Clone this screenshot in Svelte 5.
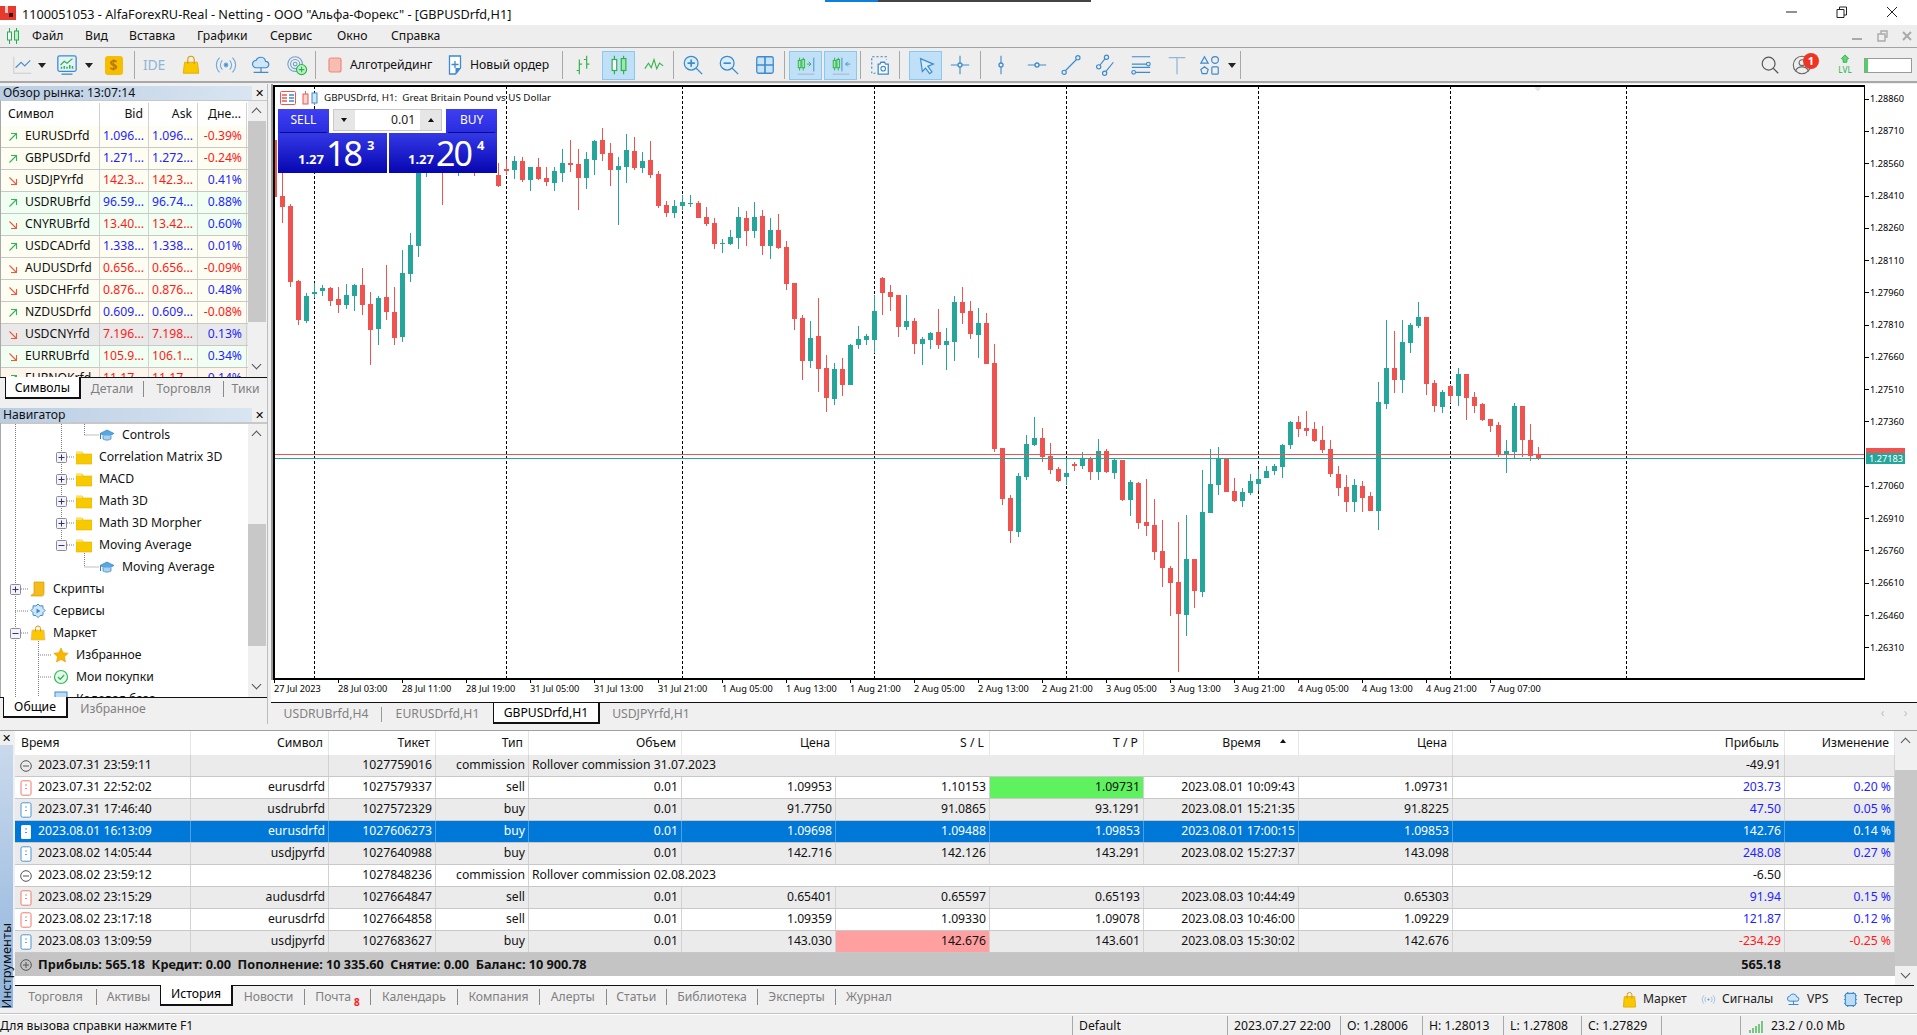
<script>
  const market = [
    ['EURUSDrfd','1.096...','1.096...','-0.39%','u','b','r','y'],
    ['GBPUSDrfd','1.271...','1.272...','-0.24%','u','b','r','y'],
    ['USDJPYrfd','142.3...','142.3...','0.41%','d','r','b','y'],
    ['USDRUBrfd','96.59...','96.74...','0.88%','u','b','b','g'],
    ['CNYRUBrfd','13.40...','13.42...','0.60%','d','r','b','g'],
    ['USDCADrfd','1.338...','1.338...','0.01%','u','b','b','y'],
    ['AUDUSDrfd','0.656...','0.656...','-0.09%','d','r','r','y'],
    ['USDCHFrfd','0.876...','0.876...','0.48%','d','r','b','y'],
    ['NZDUSDrfd','0.609...','0.609...','-0.08%','u','b','r','y'],
    ['USDCNYrfd','7.196...','7.198...','0.13%','d','r','b','n'],
    ['EURRUBrfd','105.9...','106.1...','0.34%','d','r','b','g'],
    ['EURNOKrfd','11.17...','11.17...','0.14%','u','r','b','p']
  ];
  const tree = [
    [3,'hat','','Controls'],[2,'folder','p','Correlation Matrix 3D'],[2,'folder','p','MACD'],
    [2,'folder','p','Math 3D'],[2,'folder','p','Math 3D Morpher'],[2,'folder','m','Moving Average'],
    [3,'hat','','Moving Average'],[0,'script','p','Скрипты'],[0,'gear','','Сервисы'],
    [0,'bag','m','Маркет'],[1,'star','','Избранное'],[1,'check','','Мои покупки'],[1,'doc','','Кодовая база']
  ];
  const leftTabs = [['Символы',76,true],['Детали',64,false],['Торговля',80,false],['Тики',43,false]];
  const navTabs = [['Общие',65,true],['Избранное',90,false]];
  const chartTabs = [['USDRUBrfd,H4',111,false],['EURUSDrfd,H1',111,false],['GBPUSDrfd,H1',107,true],['USDJPYrfd,H1',102,false]];
  const boxTabs = [['Торговля',82],['Активы',63],['История',73,true],['Новости',72],['Почта',66,false,'8'],['Календарь',87],['Компания',82],['Алерты',66.5],['Статьи',60.5],['Библиотека',91],['Эксперты',78],['Журнал',66]];
  const status = [['Для вызова справки нажмите F1',1073],['Default',155],['2023.07.27 22:00',113],['O: 1.28006',82],['H: 1.28013',81],['L: 1.27808',78],['C: 1.27829',80],['',79]];
  const head = [['Время','l'],['Символ','r'],['Тикет','r'],['Тип','r'],['Объем','r'],['Цена','r'],['S / L','r'],['T / P','r'],['Время','c'],['Цена','r'],['Прибыль','r'],['Изменение','r']];
  const rows = [
    {k:'c',t:'2023.07.31 23:59:11',tk:'1027759016',c:'Rollover commission 31.07.2023',p:'-49.91',z:1},
    {k:'s',t:'2023.07.31 22:52:02',s:'eurusdrfd',tk:'1027579337',ty:'sell',o:['0.01','1.09953','1.10153','1.09731','2023.08.01 10:09:43','1.09731'],p:'203.73',ch:'0.20 %',tpHit:1},
    {k:'b',t:'2023.07.31 17:46:40',s:'usdrubrfd',tk:'1027572329',ty:'buy',o:['0.01','91.7750','91.0865','93.1291','2023.08.01 15:21:35','91.8225'],p:'47.50',ch:'0.05 %',z:1},
    {k:'b',t:'2023.08.01 16:13:09',s:'eurusdrfd',tk:'1027606273',ty:'buy',o:['0.01','1.09698','1.09488','1.09853','2023.08.01 17:00:15','1.09853'],p:'142.76',ch:'0.14 %',sel:1},
    {k:'b',t:'2023.08.02 14:05:44',s:'usdjpyrfd',tk:'1027640988',ty:'buy',o:['0.01','142.716','142.126','143.291','2023.08.02 15:27:37','143.098'],p:'248.08',ch:'0.27 %',z:1},
    {k:'c',t:'2023.08.02 23:59:12',tk:'1027848236',c:'Rollover commission 02.08.2023',p:'-6.50'},
    {k:'s',t:'2023.08.02 23:15:29',s:'audusdrfd',tk:'1027664847',ty:'sell',o:['0.01','0.65401','0.65597','0.65193','2023.08.03 10:44:49','0.65303'],p:'91.94',ch:'0.15 %',z:1},
    {k:'s',t:'2023.08.02 23:17:18',s:'eurusdrfd',tk:'1027664858',ty:'sell',o:['0.01','1.09359','1.09330','1.09078','2023.08.03 10:46:00','1.09229'],p:'121.87',ch:'0.12 %'},
    {k:'b',t:'2023.08.03 13:09:59',s:'usdjpyrfd',tk:'1027683627',ty:'buy',o:['0.01','143.030','142.676','143.601','2023.08.03 15:30:02','142.676'],p:'-234.29',ch:'-0.25 %',z:1,slHit:1,neg:1}
  ];

  // wick top, wick bottom, body top, body bottom in crop units; colour
  const a8 = {0:[-90,80,-90,80,'r'],1:[-60,158,78,110,'r'],2:[102,350,108,335,'r'],3:[330,465,333,450,'r'],4:[370,458,378,453,'t'],5:[340,383,366,372,'t'],6:[346,378,354,363,'t'],7:[351,408,354,393,'r'],8:[351,429,387,405,'r'],9:[342,417,375,405,'t'],10:[342,423,345,378,'t'],11:[294,435,345,405,'r'],12:[366,585,402,480,'r'],13:[378,525,384,477,'t'],14:[285,450,381,426,'r'],15:[351,525,426,504,'r'],16:[240,516,309,501,'t'],17:[189,336,225,312,'t'],18:[-30,261,-30,228,'t'],19:[-30,21,-30,-30,'t'],21:[-30,105,-30,-30,'r'],23:[-30,18,-30,-30,'t'],25:[-30,18,-30,-30,'r'],
    48:[3,114,12,108,'r'],49:[93,141,105,129,'r'],50:[90,144,108,129,'t'],51:[75,120,96,108,'t'],52:[75,111,99,102,'t'],53:[93,144,99,144,'r'],54:[111,168,141,162,'r'],55:[144,237,159,222,'r'],56:[207,249,219,222,'t'],57:[180,225,201,222,'t'],58:[111,237,141,204,'t'],59:[123,228,144,183,'r'],60:[96,204,141,183,'t'],61:[120,255,138,228,'r'],62:[144,267,180,228,'t'],63:[132,237,180,234,'r'],64:[213,360,231,342,'r'],65:[339,480,339,447,'r'],66:[435,630,444,573,'r'],67:[453,594,504,573,'t'],68:[384,666,498,597,'r'],69:[555,726,594,684,'r'],70:[579,705,597,687,'t'],71:[564,678,597,645,'r'],72:[522,645,525,645,'t'],73:[468,537,507,525,'t'],74:[492,525,498,510,'t'],75:[375,549,423,510,'t'],76:[321,435,324,369,'r'],77:[345,423,366,381,'r'],78:[375,501,375,471,'r'],79:[375,480,453,471,'t']};
  const a10 = {28:[128,200,165,198,'r'],29:[116,165,147,153,'r'],30:[108,177,123,150,'t'],31:[111,186,123,180,'r'],32:[141,213,141,180,'t'],33:[114,180,141,177,'r'],34:[141,198,174,186,'r'],35:[141,213,153,189,'t'],36:[87,186,129,159,'t'],37:[60,156,129,135,'r'],38:[87,270,132,174,'r'],39:[96,207,117,174,'t'],40:[60,165,63,120,'t'],41:[24,123,60,102,'r'],42:[69,198,99,150,'r'],43:[111,315,138,150,'t'],44:[42,189,90,141,'t'],45:[51,150,93,144,'r'],46:[96,159,123,144,'t'],47:[63,174,120,165,'r']};
  const a9 = [[204,312,213,282,'r'],[261,345,267,282,'t'],[246,297,249,270,'t'],[177,297,246,285,'r'],[234,360,273,285,'t'],[138,333,156,276,'t'],[111,222,156,189,'r'],[153,267,183,252,'r'],[174,324,219,255,'t'],[189,342,219,342,'r'],[282,606,339,597,'r'],[594,765,594,747,'r'],[735,879,744,843,'r'],[669,861,678,846,'t'],[555,690,582,681,'t'],[501,588,564,585,'t'],[534,636,564,621,'r'],[579,672,618,660,'r'],[651,696,657,693,'r'],[625,705,669,681,'t'],[636,663,642,648,'r'],[606,657,625,648,'t'],[621,690,627,666,'r'],[567,690,603,666,'t'],[597,669,603,666,'r'],[627,687,630,669,'t'],[630,753,630,750,'r'],[690,798,696,750,'t'],[696,837,699,819,'r'],[687,858,816,828,'r'],[747,930,825,906,'r'],[810,1011,903,954,'r'],[948,1098,954,999,'r'],[816,1266,996,1092,'r'],[795,1158,927,1095,'t'],[927,1074,927,1023,'r'],[660,1041,786,1026,'t'],[597,789,702,789,'t'],[591,735,625,705,'t'],[625,726,627,726,'r'],[684,756,723,753,'r'],[714,771,726,753,'t'],[672,735,693,729,'t'],[657,723,687,702,'t'],[648,684,663,684,'t'],[642,675,648,663,'t'],[582,684,585,651,'t'],[513,597,516,585,'t'],[498,561,516,537,'r'],[483,558,534,543,'r'],[516,576,537,573,'r'],[528,609,570,600,'r'],[570,681,597,672,'r'],[648,738,672,714,'r'],[675,786,711,756,'r'],[687,786,705,756,'t'],[693,786,708,744,'r'],[726,783,738,783,'r'],[396,840,456,783,'t'],[210,477,354,462,'t'],[243,429,354,390,'r'],[210,429,276,390,'t'],[219,309,225,279,'t'],[156,234,201,228,'t'],[201,435,201,402,'r'],[390,486,399,468,'r'],[420,489,426,471,'t'],[405,459,408,438,'r'],[354,468,372,438,'t'],[372,510,372,444,'r'],[426,489,441,468,'r'],[459,513,462,510,'r'],[507,546,507,528,'r'],[516,621,525,615,'r'],[570,669,603,615,'t'],[459,624,468,606,'t'],[468,621,468,570,'r'],[522,633,570,618,'r'],[591,630,615,627,'r']];

  const toCandle = (i, v, y0) => ({
    x: 274.5 + 8 * i,
    wt: y0 + v[0] / 3, wb: y0 + v[1] / 3, bt: y0 + v[2] / 3, bb: y0 + v[3] / 3,
    c: v[4] === 'r' ? '#ef5350' : '#26a69a'
  });
  const candles = [
    ...Object.entries(a8).map(([i, v]) => toCandle(+i, v, 170)),
    ...Object.entries(a10).map(([i, v]) => toCandle(+i, v, 120)),
    ...a9.map((v, i) => toCandle(80 + i, v, 250))
  ];
  const dashes = [314.5,506.5,682.5,874.5,1066.5,1258.5,1450.5,1626.5];
  const prices = ['1.28860','1.28710','1.28560','1.28410','1.28260','1.28110','1.27960','1.27810','1.27660','1.27510','1.27360','','1.27060','1.26910','1.26760','1.26610','1.26460','1.26310'];
  const times = ['27 Jul 2023','28 Jul 03:00','28 Jul 11:00','28 Jul 19:00','31 Jul 05:00','31 Jul 13:00','31 Jul 21:00','1 Aug 05:00','1 Aug 13:00','1 Aug 21:00','2 Aug 05:00','2 Aug 13:00','2 Aug 21:00','3 Aug 05:00','3 Aug 13:00','3 Aug 21:00','4 Aug 05:00','4 Aug 13:00','4 Aug 21:00','7 Aug 07:00'];
  const guides = [
    [15.5,423,15.5,696],[61.5,423,61.5,544],[84.5,423,84.5,434],[84.5,434,99,434],[84.5,550,84.5,566],[84.5,566,99,566],
    [61,456,74,456],[61,478,74,478],[61,500,74,500],[61,522,74,522],[61,544,74,544],
    [15,588,28,588],[15,610,28,610],[15,632,28,632],[38.5,640,38.5,696],[38,654,51,654],[38,676,51,676]
  ];
</script>

<div class="app">
  <header class="title">
    <div class="progress"></div>
    <svg class="logo" viewBox="0 0 16 16"><rect width="16" height="14" y="1" fill="#e63a2e"/><rect x="5" y="1" width="3" height="7" fill="#f7c9c4"/><rect x="9" y="8" width="4" height="4" fill="#3a1512"/></svg>
    <span class="title-text">1100051053 - AlfaForexRU-Real - Netting - ООО "Альфа-Форекс" - [GBPUSDrfd,H1]</span>
    <div class="winbtns">
      <svg viewBox="0 0 50 25"><path d="M19 12h11" stroke="#222" fill="none"/></svg>
      <svg viewBox="0 0 50 25"><path d="M20 9.500h7v8h-7zM22.500 9.500v-2.500h7v8h-2.500" stroke="#222" fill="none"/></svg>
      <svg viewBox="0 0 50 25"><path d="M20 7l10 10M30 7L20 17" stroke="#222" fill="none"/></svg>
    </div>
  </header>

  <nav class="menu">
    <svg class="menu-logo" viewBox="0 0 14 18"><path d="M3.500 1v16M10.500 1v16" stroke="#27ae4f"/><rect x="1.500" y="5" width="4" height="8" fill="#fff" stroke="#27ae4f"/><rect x="8.500" y="4" width="4" height="9" fill="#bff0c8" stroke="#27ae4f"/></svg>
    <div class="menu-items">
      <span>Файл</span><span>Вид</span><span>Вставка</span><span>Графики</span><span>Сервис</span><span>Окно</span><span>Справка</span>
    </div>
    <div class="innerbtns">
      <svg viewBox="0 0 14 12"><path d="M2 9h10" stroke="#aaa" stroke-width="2"/></svg>
      <svg viewBox="0 0 14 12"><path d="M3 4h7v7H3zM6 4V1h6v6h-2" stroke="#aaa" stroke-width="1.400" fill="none"/></svg>
      <svg viewBox="0 0 14 12"><path d="M3 2l8 8M11 2l-8 8" stroke="#aaa" stroke-width="2"/></svg>
    </div>
  </nav>

  <div class="toolbar">
    <span class="tb w27"><svg viewBox="0 0 24 24"><path d="M3 3v18h19" stroke="#c8c8c8" fill="none"/><path d="M5 15l6-6 4 4 6-6" stroke="#4a90d0" stroke-width="1.300" fill="none"/></svg></span>
    <span class="tb w14"><i class="caret"></i></span>
    <span class="tb w36"><svg viewBox="0 0 24 24"><rect x="2" y="2" width="20" height="17" rx="2" fill="#e6f2fb" stroke="#3d8bcd" stroke-width="1.400"/><path d="M5 12l4-4 3 2 6-5" stroke="#2bb24c" stroke-width="1.300" fill="none"/><path d="M6 16v-2M9 16v-3M12 16v-2M15 16v-4M18 16v-3" stroke="#2bb24c" stroke-width="1.600"/><path d="M6 22h12" stroke="#3d8bcd" stroke-width="1.400"/></svg></span>
    <span class="tb w8"><i class="caret"></i></span>
    <span class="tb w41"><span class="dollar">$</span></span>
    <i class="sep"></i>
    <span class="tb w38"><span class="ide">IDE</span></span>
    <span class="tb w35"><svg viewBox="0 0 24 24"><path d="M5 9h14l1.500 12h-17z" fill="#f8c800" stroke="#e6ae00"/><path d="M8.500 11V6a3.500 3.500 0 0 1 7 0v5" stroke="#d89a00" fill="none" stroke-width="1.200"/></svg></span>
    <span class="tb w35"><svg viewBox="0 0 24 24" fill="none" stroke="#74abd8" stroke-width="1.200"><circle cx="12" cy="12" r="2" fill="#4a90d0"/><path d="M8 7a7 7 0 0 0 0 10M16 7a7 7 0 0 1 0 10M5 4a11 11 0 0 0 0 16M19 4a11 11 0 0 1 0 16"/></svg></span>
    <span class="tb w35"><svg viewBox="0 0 24 24" fill="none" stroke="#3d8bcd" stroke-width="1.300"><path d="M7 15a4 4 0 0 1-.5-8 5.500 5.500 0 0 1 10.500 1 3.500 3.500 0 0 1 0 7z" fill="#cfe6f8"/><path d="M12 15v5M4 20h16"/></svg></span>
    <span class="tb w37"><svg viewBox="0 0 24 24" fill="none" stroke="#6fa3cf" stroke-width="1.200"><circle cx="10" cy="11" r="8"/><circle cx="10" cy="11" r="5"/><circle cx="10" cy="11" r="2"/><circle cx="17" cy="17" r="5.500" fill="#bdf0c6" stroke="#2bb24c"/><path d="M17 14v6M14 17h6" stroke="#2bb24c"/></svg></span>
    <i class="sep"></i>
    <span class="algo"><svg viewBox="0 0 14 16"><rect x="1" y="1" width="12" height="14" rx="2" fill="#f7bdb3" stroke="#f08a78" stroke-width="1.200"/></svg></span>
    <span class="tb-label l81">Алготрейдинг</span>
    <span class="order"><svg viewBox="0 0 16 20"><path d="M2.500 1h11v12l-5 6h-6z" fill="#fff" stroke="#3d8bcd" stroke-width="1.300"/><path d="M8 6v7M4.500 9.500h7" stroke="#3d8bcd" stroke-width="1.300"/><path d="M8.500 19l5-6h-5z" fill="#3d8bcd"/></svg></span>
    <span class="tb-label l81">Новый ордер</span>
    <i class="sep m11"></i>
    <span class="tb w39"><svg viewBox="0 0 24 24" stroke="#35b34a" stroke-width="1.300" fill="none"><path d="M8 6v16M5 18h3M8 11h3M16 2v14M13 6h3M16 11h3"/></svg></span>
    <span class="tb sel w33"><svg viewBox="0 0 24 24" stroke="#2bb24c" stroke-width="1.300"><path d="M7 2v20M17 2v20"/><rect x="4.500" y="6" width="5" height="12" fill="#fff"/><rect x="14.500" y="5" width="5" height="13" fill="#9ee8a9"/></svg></span>
    <span class="tb w38"><svg viewBox="0 0 24 24"><path d="M2 16l4-6 3 5 3-9 3 10 3-6 4 3" stroke="#35b34a" stroke-width="1.200" fill="none"/></svg></span>
    <i class="sep"></i>
    <span class="tb w38"><svg viewBox="0 0 24 24" fill="none" stroke="#3d8bcd" stroke-width="1.400"><circle cx="10" cy="10" r="7.500" fill="#dcedfa"/><path d="M10 6v8M6 10h8" stroke-width="1.800"/><path d="M15.500 15.500L22 22"/></svg></span>
    <span class="tb w34"><svg viewBox="0 0 24 24" fill="none" stroke="#3d8bcd" stroke-width="1.400"><circle cx="10" cy="10" r="7.500" fill="#dcedfa"/><path d="M6 10h8" stroke-width="1.800"/><path d="M15.500 15.500L22 22"/></svg></span>
    <span class="tb w38"><svg viewBox="0 0 24 24" fill="#c9e4f9" stroke="#3d8bcd" stroke-width="1.400"><rect x="3" y="3" width="18" height="18" rx="2"/><path d="M12 3v18M3 12h18" stroke-width="1.800"/></svg></span>
    <i class="sep"></i>
    <span class="tb sel w33 ml4"><svg viewBox="0 0 24 24"><path d="M5 4v14M9 4v14" stroke="#2bb24c"/><rect x="3.500" y="7" width="3" height="8" fill="#9ee8a9" stroke="#2bb24c"/><rect x="7.500" y="6" width="3" height="9" fill="#9ee8a9" stroke="#2bb24c"/><path d="M13 11h4M15 8.500l2.500 2.500-2.500 2.500" stroke="#2bb24c" fill="none"/><path d="M20.500 4v15" stroke="#3d8bcd"/><path d="M3 22h18" stroke="#a0b4c4"/></svg></span>
    <span class="tb sel w33 ml2"><svg viewBox="0 0 24 24"><path d="M5 4v14M9 4v14" stroke="#2bb24c"/><rect x="3.500" y="7" width="3" height="8" fill="#9ee8a9" stroke="#2bb24c"/><rect x="7.500" y="6" width="3" height="9" fill="#9ee8a9" stroke="#2bb24c"/><path d="M13 4v15" stroke="#3d8bcd"/><path d="M22 11h-5M19.500 8.500L17 11l2.500 2.500" stroke="#3d8bcd" fill="none"/><path d="M3 22h18" stroke="#a0b4c4"/></svg></span>
    <i class="sep m3"></i>
    <span class="tb w38"><svg viewBox="0 0 24 24" fill="none" stroke="#3d8bcd" stroke-width="1.200"><path d="M3 16V3h16v3" stroke-dasharray="2.500 2"/><path d="M3 19v2h4" stroke-dasharray="2 2"/><path d="M10 11h2l1-2h4l1 2h3v11H10z" fill="#fff" stroke-width="1.400"/><circle cx="15.500" cy="16" r="2.500"/></svg></span>
    <i class="sep"></i>
    <span class="tb sel w33 ml9"><svg viewBox="0 0 24 24"><path d="M6 5l14 6-6 2.500 4.500 6-2.500 2-4.500-6L8 19z" fill="#d6ecfb" stroke="#3d8bcd" stroke-width="1.300"/></svg></span>
    <span class="tb w36"><svg viewBox="0 0 24 24" fill="none" stroke="#3d8bcd" stroke-width="1.200"><path d="M12 2v8M12 14v8M2 12h8M14 12h8"/><circle cx="12" cy="12" r="2.200" stroke-width="1.400"/></svg></span>
    <i class="sep m2"></i>
    <span class="tb w39"><svg viewBox="0 0 24 24" fill="none" stroke="#3d8bcd" stroke-width="1.200"><path d="M12 2v8M12 14v8"/><circle cx="12" cy="12" r="2.200" stroke-width="1.400"/></svg></span>
    <span class="tb w33"><svg viewBox="0 0 24 24" fill="none" stroke="#3d8bcd" stroke-width="1.200"><path d="M2 12h8M14 12h8"/><circle cx="12" cy="12" r="2.200" stroke-width="1.400"/></svg></span>
    <span class="tb w35"><svg viewBox="0 0 24 24" fill="none" stroke="#3d8bcd" stroke-width="1.300"><path d="M6 18L18 6"/><circle cx="4.500" cy="20" r="2.300"/><circle cx="19.500" cy="4" r="2.300"/></svg></span>
    <span class="tb w35"><svg viewBox="0 0 24 24" fill="none" stroke="#3d8bcd" stroke-width="1.300"><path d="M5.500 12L11 5M12 19L20 9"/><circle cx="4" cy="14" r="2.300"/><circle cx="12.500" cy="3.500" r="2.300"/><circle cx="10.500" cy="21" r="2.300"/></svg></span>
    <span class="tb w36"><svg viewBox="0 0 24 24" fill="none" stroke="#3d8bcd" stroke-width="1.300"><path d="M2 3h20M2 11h16M2 14.500h20M6 20h16"/><circle cx="20" cy="11" r="2"/><circle cx="4" cy="20" r="2"/></svg></span>
    <span class="tb w35"><svg viewBox="0 0 24 24" fill="none" stroke="#8fb9dc" stroke-width="1.400"><path d="M3 4h18M12 4v18"/></svg></span>
    <span class="tb w32"><svg viewBox="0 0 24 24" fill="none" stroke="#3d8bcd" stroke-width="1.300"><path d="M6 3l4 7H2z"/><circle cx="17.500" cy="6.500" r="3.700"/><path d="M6 14l4 3-1.500 4.500h-5L2 17z"/><rect x="14" y="14" width="7" height="8" rx="1"/></svg></span>
    <span class="tb w12"><i class="caret"></i></span>
    <i class="sep m2"></i>
    <span class="tb-spacer"></span>
    <span class="tb w32"><svg viewBox="0 0 24 24" fill="none" stroke="#555" stroke-width="1.300"><circle cx="10.500" cy="10.500" r="7"/><path d="M15.500 15.500L21 21"/></svg></span>
    <span class="tb w32 user"><svg viewBox="0 0 24 24" fill="none" stroke="#666" stroke-width="1.200"><circle cx="12" cy="12" r="9.500"/><circle cx="12" cy="9.500" r="3.200"/><path d="M5 19c1-4 4-5 7-5s6 1 7 5"/></svg><b class="badge">1</b></span>
    <span class="tb w32 ml11"><svg viewBox="0 0 24 24"><path d="M12 1l4 4-2 1v3h-4V6L8 5z" fill="#5fd873" stroke="#2bb24c"/><text x="12" y="21" text-anchor="middle" class="lvl">LVL</text></svg></span>
    <span class="meter ml3"><i></i></span>
  </div>

  <div class="main">
    <aside class="left">
      <div class="phead"><span>Обзор рынка: 13:07:14</span><b class="x">✕</b></div>
      <div class="mw">
        <div class="mw-table">
          <div class="mw-row mw-head"><span class="sym">Символ</span><span>Bid</span><span>Ask</span><span>Дне...</span></div>
          {#each market as m}
            <div class="mw-row bg-{m[7]}">
              <span class="sym">
                <svg class="arr" viewBox="0 0 10 10">{#if m[4]==='u'}<path d="M1.500 8.500L8.500 1.500M3 1.500h5.500V7" stroke="#2fb55a" fill="none" stroke-width="1.100"/>{:else}<path d="M1.500 1.500L8.500 8.500M3 8.500h5.500V3" stroke="#f0583c" fill="none" stroke-width="1.100"/>{/if}</svg>{m[0]}</span>
              <span class="c-{m[5]}">{m[1]}</span><span class="c-{m[5]}">{m[2]}</span><span class="c-{m[6]}">{m[3]}</span>
            </div>
          {/each}
        </div>
        <div class="sb sb-mw"><span class="chev up"></span><i class="thumb"></i><span class="sb-fill"></span><span class="chev down"></span></div>
      </div>
      <div class="ptabs">
        {#each leftTabs as t}<span class="ptab" class:on={t[2]} style:width="{t[1]}px">{t[0]}</span>{/each}
      </div>

      <div class="phead nav"><span>Навигатор</span><b class="x">✕</b></div>
      <div class="navbody">
        <div class="tree">
          <svg class="guides" viewBox="0 423 248 273">
            {#each guides as g}<line x1={g[0]} y1={g[1]} x2={g[2]} y2={g[3]} stroke="#808080" stroke-dasharray="1 1"/>{/each}
          </svg>
          {#each tree as n}
            <div class="node" style:padding-left="{7 + 23 * n[0]}px">
              <span class="boxslot">{#if n[2]}<span class="exp"><svg viewBox="0 0 11 11"><rect x=".5" y=".5" width="10" height="10" rx="1" fill="#f4f4f8" stroke="#8a8a9a"/><path d="M2.500 5.500h6" stroke="#33337a"/>{#if n[2]==='p'}<path d="M5.500 2.500v6" stroke="#33337a"/>{/if}</svg></span>{/if}</span>
              <span class="nicon">
                {#if n[1]==='folder'}<svg viewBox="0 0 16 16"><path d="M0 3h6l1 2h9v10H0z" fill="#f7c900" stroke="#e7b400" stroke-width=".6"/><path d="M0 3h6v2H0z" fill="#ffe15a"/></svg>
                {:else if n[1]==='hat'}<svg viewBox="0 0 16 16"><path d="M8 3L1 6.500 8 10l7-3.500z" fill="#5aa7e0" stroke="#2f7fc0" stroke-width=".7"/><path d="M4 8.500v3.500c2 1.500 6 1.500 8 0V8.500" fill="#a8d2f0" stroke="#2f7fc0" stroke-width=".7"/><path d="M1.500 7v5" stroke="#2f7fc0"/></svg>
                {:else if n[1]==='script'}<svg viewBox="0 0 16 16"><path d="M4 1h10v11c0 2-1 3-2 3H1c0-1 1-2 3-2z" fill="#f4bb1c" stroke="#dd9c00" stroke-width=".7"/></svg>
                {:else if n[1]==='gear'}<svg viewBox="0 0 16 16"><path d="M8 1l2 2 2.800-.3.300 2.800 2 2-2 2-.3 2.800-2.800.3-2 2-2-2-2.800-.3-.3-2.800-2-2 2-2 .3-2.800 2.800.3z" fill="#cfe6f8" stroke="#3d8bcd"/><path d="M6.500 5.500l4 2.500-4 2.500z" fill="#3d8bcd"/></svg>
                {:else if n[1]==='bag'}<svg viewBox="0 0 16 16"><path d="M2 5h12l1 10H1z" fill="#f8c800" stroke="#f0a8a0" stroke-width=".6"/><path d="M5.500 6.500V3.500a2.500 2.500 0 0 1 5 0v3" stroke="#d89a00" fill="none"/></svg>
                {:else if n[1]==='star'}<svg viewBox="0 0 16 16"><path d="M8 1l2.200 4.700 5 .6-3.700 3.500 1 5.200L8 12.400 3.500 15l1-5.200L.8 6.300l5-.6z" fill="#f8b800" stroke="#e59b00" stroke-width=".6"/></svg>
                {:else if n[1]==='check'}<svg viewBox="0 0 16 16"><circle cx="8" cy="8" r="6.500" fill="#e4f9ea" stroke="#35b85a" stroke-width="1.200"/><path d="M5 8l2.200 2.300L11.200 6" stroke="#35b85a" stroke-width="1.300" fill="none"/></svg>
                {:else}<svg viewBox="0 0 16 16"><rect x="2" y="1" width="12" height="14" fill="#bcdcf5" stroke="#3d8bcd"/></svg>{/if}
              </span>
              <span class="nlabel">{n[3]}</span>
            </div>
          {/each}
        </div>
        <div class="sb sb-nav"><span class="chev up"></span><span class="sb-gap1"></span><i class="thumb"></i><span class="sb-fill"></span><span class="chev down"></span></div>
      </div>
      <div class="ptabs navtabs">
        {#each navTabs as t}<span class="ptab" class:on={t[2]} style:width="{t[1]}px">{t[0]}</span>{/each}
      </div>
    </aside>

    <section class="chartcol">
      <div class="chart">
        <svg class="plot" viewBox="271 84 1646 618" shape-rendering="crispEdges">
          <rect x="271" y="84" width="1646" height="618" fill="#fff"/>
          <path d="M1533 85h10l-5 7z" fill="#e6e6e6"/>
          {#each dashes as x}<line x1={x} y1="86" x2={x} y2="678" stroke="#000" stroke-dasharray="3 2"/>{/each}
          {#each candles as c}
            <line x1={c.x} x2={c.x} y1={c.wt} y2={c.wb} stroke={c.c}/>
            {#if c.bb > c.bt}<rect x={c.x - 2.5} y={c.bt} width="5" height={c.bb - c.bt} fill={c.c}/>{/if}
          {/each}
          <line x1="274" x2="1864" y1="454.500" y2="454.500" stroke="#ef5350"/>
          <line x1="274" x2="1864" y1="458.500" y2="458.500" stroke="#26a69a"/>
          <rect x="271" y="84" width="1.500" height="596" fill="#9a9a9a"/>
          <rect x="273" y="85" width="1.500" height="595" fill="#000"/>
          <rect x="273" y="85" width="1592" height="1.500" fill="#000"/>
          <rect x="1863.500" y="85" width="1.500" height="595" fill="#000"/>
          <rect x="273" y="678" width="1592" height="1.500" fill="#000"/>
          {#each prices as p, i}
            {#if p}
              <line x1="1865" x2="1869" y1={Math.round(98.7 + 32.27 * i) + .5} y2={Math.round(98.7 + 32.27 * i) + .5} stroke="#000"/>
              <text class="axis" x="1870" y={98.7 + 32.27 * i + 3.5}>{p}</text>
            {/if}
          {/each}
          <rect x="1866" y="448" width="39" height="6" fill="#ef5350"/>
          <rect x="1866" y="453" width="39" height="11" fill="#26a69a"/>
          <text class="axis tag" x="1869" y="462">1.27183</text>
          {#each times as t, i}
            <line x1={274.5 + 64 * i} x2={274.5 + 64 * i} y1="679" y2="683" stroke="#000"/>
            <text class="axis" x={274 + 64 * i} y="692">{t}</text>
          {/each}
        </svg>
        <div class="ch-head">
          <svg viewBox="0 0 16 14"><rect x=".5" y=".5" width="15" height="13" rx="1" fill="#fff" stroke="#ef5350"/><path d="M2 4h5M2 7h5M2 10h5" stroke="#ef5350" stroke-width="1.500"/><path d="M9 4h5M9 7h5M9 10h5" stroke="#3d8bcd" stroke-width="1.500"/></svg>
          <svg viewBox="0 0 16 14"><rect x="1" y="3" width="5" height="10" fill="#fbd6d0" stroke="#ef5350"/><rect x="10" y="2" width="5" height="10" fill="#cfe6f8" stroke="#3d8bcd"/><path d="M3.500 0v3M12.500 12v2" stroke="#888"/></svg>
          <span>GBPUSDrfd, H1:&nbsp; Great Britain Pound vs US Dollar</span>
        </div>
        <div class="trade">
          <div class="trade-top">
            <div class="t-side"><span>SELL</span></div>
            <div class="t-mid">
              <span class="spin"><i class="tri-d"></i></span>
              <span class="t-vol">0.01</span>
              <span class="spin"><i class="tri-u"></i></span>
            </div>
            <div class="t-side"><span>BUY</span></div>
          </div>
          <div class="trade-low">
            <div class="t-price"><span class="p-s">1.27</span><span class="p-b">18</span><span class="p-t">3</span></div>
            <div class="t-price"><span class="p-s">1.27</span><span class="p-b">20</span><span class="p-t">4</span></div>
          </div>
        </div>
      </div>
      <div class="ctabs">
        {#each chartTabs as t}<span class="ctab" class:on={t[2]} style:width="{t[1]}px">{t[0]}</span>{/each}
        <span class="ctab-spacer"></span>
        <span class="pager">‹</span><span class="pager">›</span>
      </div>
    </section>
  </div>

  <div class="toolbox">
    <div class="strip">
      <b class="x">✕</b>
      <div class="strip-bar"><span>Инструменты</span></div>
    </div>
    <div class="tb-right">
      <div class="tb-upper">
        <div class="trades">
          <div class="tr th">
            {#each head as h, i}<span class="a-{h[1]}" class:first={i===0}>{h[0]}{#if i===8}<i class="sort"></i>{/if}</span>{/each}
          </div>
          {#each rows as r}
            <div class="tr" class:z={r.z} class:selrow={r.sel} class:neg={r.neg}>
              <span class="first rowtime">
                <span class="ricon">
                  {#if r.k==='c'}<svg viewBox="0 0 12 12"><circle cx="6" cy="6" r="5.300" fill="none" stroke="#555"/><path d="M3 6h6" stroke="#555"/></svg>
                  {:else if r.sel}<svg viewBox="0 0 12 16"><rect x="1" y="1" width="10" height="14" rx="1.500" fill="#fff"/><path d="M6 4.500v1M6 8v1" stroke="#0078d7" stroke-width="1.500"/></svg>
                  {:else if r.k==='s'}<svg viewBox="0 0 12 16"><rect x="1" y=".8" width="10" height="14.400" rx="1.500" fill="#fff" stroke="#f07868"/><path d="M6 4.500v1M6 8v1" stroke="#f05a4a" stroke-width="1.500"/></svg>
                  {:else}<svg viewBox="0 0 12 16"><rect x="1" y=".8" width="10" height="14.400" rx="1.500" fill="#fff" stroke="#4a94d8"/><path d="M6 4.500v1M6 8v1" stroke="#3d8bcd" stroke-width="1.500"/></svg>{/if}
                </span>{r.t}
              </span>
              <span class="a-r">{r.s ?? ''}</span>
              <span class="a-r">{r.tk}</span>
              <span class="a-r">{r.k==='c' ? 'commission' : r.ty}</span>
              {#if r.k==='c'}
                <span class="comment">{r.c}</span>
              {:else}
                <span class="a-r">{r.o[0]}</span>
                <span class="a-r">{r.o[1]}</span>
                <span class="a-r" class:slhit={r.slHit}>{r.o[2]}</span>
                <span class="a-r" class:tphit={r.tpHit}>{r.o[3]}</span>
                <span class="a-r">{r.o[4]}</span>
                <span class="a-r">{r.o[5]}</span>
              {/if}
              <span class="a-r" class:money={r.k!=='c'}>{r.p}</span>
              <span class="a-r" class:money={r.k!=='c'}>{r.ch ?? ''}</span>
            </div>
          {/each}
          <div class="sumrow">
            <span class="ricon"><svg viewBox="0 0 12 12"><circle cx="6" cy="6" r="5.300" fill="none" stroke="#555"/><path d="M3 6h6M6 3v6" stroke="#555"/></svg></span>
            <span class="sumtext">Прибыль: 565.18 &nbsp;Кредит: 0.00 &nbsp;Пополнение: 10 335.60 &nbsp;Снятие: 0.00 &nbsp;Баланс: 10 900.78</span>
            <span class="sumtotal">565.18</span>
          </div>
        </div>
        <div class="sb sb-box"><span class="chev up"></span><span class="sb-gap2"></span><i class="thumb"></i><span class="sb-fill"></span><span class="chev down"></span></div>
      </div>
      <div class="btabs">
        {#each boxTabs as t, i}
          <span class="btab" class:on={t[2]} class:nosep={i===1 || i===2 || i===11} style:width="{t[1]}px">{t[0]}{#if t[3]}<sub>{t[3]}</sub>{/if}</span>
        {/each}
        <span class="ctab-spacer"></span>
        <span class="bt-r b1"><svg viewBox="0 0 14 18"><path d="M1.500 6h11l1 11h-13z" fill="#f8c800" stroke="#e6ae00"/><path d="M4.500 8V4a2.500 2.500 0 0 1 5 0v4" stroke="#d89a00" fill="none"/></svg>Маркет</span>
        <span class="bt-r b2"><svg viewBox="0 0 18 12" fill="none" stroke="#8fb9dc"><circle cx="9" cy="6" r="1" fill="#4a90d0"/><path d="M6 3a4 4 0 0 0 0 6M12 3a4 4 0 0 1 0 6M3.500 1a8 8 0 0 0 0 10M14.500 1a8 8 0 0 1 0 10"/></svg>Сигналы</span>
        <span class="bt-r b3"><svg viewBox="0 0 18 18" fill="none" stroke="#3d8bcd" stroke-width="1.200"><path d="M5 11a3 3 0 0 1-.5-6 4.500 4.500 0 0 1 8.500 1 2.500 2.500 0 0 1 0 5z" fill="#cfe6f8"/><path d="M9 11v4M3 15h12"/></svg>VPS</span>
        <span class="bt-r b4"><svg viewBox="0 0 16 18" fill="#bcdcf5" stroke="#3d8bcd" stroke-width="1.200"><rect x="2.500" y="2.500" width="11" height="13" rx="2"/><path d="M1 5h1M1 9h1M1 13h1M14 5h1M14 9h1M14 13h1M5 1v1M11 1v1M5 16v1M11 16v1"/></svg>Тестер</span>
      </div>
    </div>
  </div>

  <footer class="status">
    {#each status as s}<span class="st" style:width="{s[1]}px">{s[0]}</span>{/each}
    <span class="st lastst">
      <svg viewBox="0 0 16 14"><path d="M2 13v-3M5 13V8M8 13V6M11 13V4M14 13V1" stroke="#35b34a" stroke-width="1.300"/></svg>23.2 / 0.0 Mb
    </span>
  </footer>
</div>

<style>
  :global(body) { margin: 0; background: #f0f0f0; }
  .app {
    width: 1917px; height: 1035px; overflow: hidden; display: flex; flex-direction: column;
    font: 12.2px/1 "Noto Sans", "Open Sans", sans-serif; color: #111; background: #f0f0f0;
    --blue: #1f1fff; --red: #ff1a1a;
  }
  svg { display: block; }
  i { font-style: normal; }

  /* title */
  .title { height: 25px; flex: none; background: #fff; display: flex; align-items: center; position: relative; }
  .progress { position: absolute; left: 825px; top: 0; width: 266px; height: 2px; background: linear-gradient(90deg, #0f7fdd 0 20%, #444 20%); }
  .logo { width: 16px; height: 16px; margin-right: 6px; }
  .title-text { white-space: nowrap; font-size: 12.700px; padding-top: 3px; }
  .winbtns { margin-left: auto; display: flex; padding-right: 0; }
  .winbtns svg { width: 50px; height: 25px; }

  /* menu */
  .menu { height: 22px; flex: none; background: #eee; display: flex; align-items: center; border-bottom: 1px solid #a2a2a2; box-sizing: content-box; }
  .menu-logo { width: 14px; height: 18px; margin: 0 12px 0 6px; }
  .menu-items { display: grid; grid-template-columns: 53px 44px 68px 73px 67px 54px auto; padding-top: 1px; }
  .innerbtns { margin-left: auto; display: flex; gap: 11px; padding-right: 3px; }
  .innerbtns svg { width: 14px; height: 12px; }

  /* toolbar */
  .toolbar { height: 32px; padding-top: 1px; flex: none; background: #eee; display: flex; align-items: center; padding-left: 8px; border-bottom: 2px solid #a8a8a8; box-sizing: content-box; }
  .tb { height: 29px; display: flex; align-items: center; justify-content: center; flex: none; box-sizing: border-box; }
  .tb svg { width: 22px; height: 22px; }
  .w8 { width: 8px; } .w12 { width: 12px; } .w14 { width: 14px; } .w27 { width: 27px; } .w32 { width: 32px; } .w33 { width: 33px; }
  .w34 { width: 34px; } .w35 { width: 35px; } .w36 { width: 36px; } .w37 { width: 37px; } .w38 { width: 38px; } .w39 { width: 39px; } .w41 { width: 41px; }
  .ml2 { margin-left: 2px; } .ml3 { margin-left: 3px; } .ml4 { margin-left: 4px; } .ml9 { margin-left: 9px; } .ml11 { margin-left: 11px; }
  .sel { background: #bfe0f7; border: 1px solid #8ac8f0; }
  .caret { display: block; width: 0; height: 0; border: 4px solid transparent; border-top: 5px solid #222; border-bottom: 0; }
  .sep { display: block; width: 1px; height: 28px; background: #a8a8a8; flex: none; }
  .m2 { margin-left: 2px; } .m3 { margin-left: 3px; } .m11 { margin-left: 11px; }
  .dollar { width: 18px; height: 19px; border-radius: 3px; background: #f7bd00; color: #b97a00; font-weight: 700; font-size: 14px; display: flex; align-items: center; justify-content: center; }
  .ide { color: #8fb6d8; font-size: 14px; letter-spacing: -.3px; }
  .algo { margin-left: 12px; width: 14px; height: 16px; flex: none; margin-right: 8px; }
  .order { margin-left: 16px; width: 16px; height: 20px; flex: none; margin-right: 7px; }
  .tb-label { display: block; flex: none; white-space: nowrap; }
  .l81 { width: 81px; }
  .tb-spacer { flex: 1; }
  .user { position: relative; }
  .badge { position: absolute; left: 17px; top: 2px; width: 16px; height: 16px; border-radius: 50%; background: #ee3524; color: #fff; font-size: 11px; display: flex; align-items: center; justify-content: center; }
  .lvl { font-size: 9px; fill: #2bb24c; font-family: "Noto Sans", sans-serif; }
  .meter { width: 48px; height: 15px; background: #fff; border: 1px solid #9a9a9a; box-sizing: border-box; flex: none; margin-right: 5px; }
  .meter i { display: block; width: 3px; height: 100%; background: #47d65f; }

  /* main area */
  .main { height: 640px; margin-top: 1px; flex: none; display: flex; }
  .left { width: 267px; flex: none; padding-top: 2px; display: flex; flex-direction: column; border-right: 1px solid #bcbcbc; box-sizing: content-box; }
  .phead { height: 14px; flex: none; margin-right: 15px; position: relative; display: flex; align-items: center; padding-left: 3px; background: linear-gradient(90deg, #b9cde4, #d9e5f1); }
  .nav { margin-top: 8px; }
  .x { position: absolute; right: -14px; top: 0; width: 14px; text-align: center; font-size: 11px; font-weight: 400; line-height: 14px; color: #000; }
  .mw { height: 277px; flex: none; display: flex; border-top: 1px solid #c8c8c8; border-left: 1px solid #a8a8a8; box-sizing: border-box; overflow: hidden; }
  .mw-table { width: 247px; flex: none; }
  .mw-row { display: grid; grid-template-columns: 99px 49px 49px 49px; height: 22px; background: #fff; box-sizing: border-box; border-bottom: 1px solid #c8c8c8; }
  .mw-head { height: 25px; border-bottom: 0; padding-top: 2px; }
  .mw-row span { display: flex; align-items: center; justify-content: flex-end; padding-right: 4px; border-right: 1px solid #d2d2d2; white-space: nowrap; overflow: hidden; }
  .mw-row .sym { justify-content: flex-start; padding-left: 7px; }
  .mw-head span:not(.sym) { padding-right: 5px; }
  .mw-row:not(.mw-head) .sym { padding-left: 7px; }
  .arr { width: 10px; height: 10px; margin-right: 7px; flex: none; }
  .bg-y { background: #fdfdf1; } .bg-g { background: #f1fff3; } .bg-n { background: #e9e9e9; } .bg-p { background: #fdf5ec; }
  .c-b { color: var(--blue); } .c-r { color: var(--red); }

  .sb { background: #f0f0f0; display: flex; flex-direction: column; align-items: center; flex: none; box-sizing: border-box; }
  .sb .thumb { display: block; width: 100%; background: #c8c8c8; flex: none; }
  .sb-fill { flex: 1; }
  .chev { width: 18px; height: 20px; flex: none; position: relative; display: block; }
  .chev::after { content: ""; position: absolute; left: 5px; width: 6px; height: 6px; border-left: 1.500px solid #555; border-top: 1.500px solid #555; transform: rotate(45deg); top: 8px; }
  .chev.down::after { transform: rotate(225deg); top: 4px; }
  .sb-mw { width: 18px; }
  .sb-mw .thumb { height: 201px; }
  .sb-nav { width: 18px; }
  .sb-gap1 { height: 80px; flex: none; }
  .sb-nav .thumb { height: 122px; }
  .sb-box { width: 22px; height: 254px; }
  .sb-gap2 { height: 19px; flex: none; }
  .sb-box .thumb { height: 196px; }

  .ptabs { height: 23px; flex: none; display: flex; border-top: 1px solid #111; box-sizing: border-box; padding-left: 5px; color: #808080; margin-right: 0; }
  .ptab { display: flex; align-items: center; justify-content: center; height: 16px; margin-top: 3px; border-right: 1px solid #8a8a8a; box-sizing: border-box; white-space: nowrap; }
  .ptab:last-child { border-right: 0; }
  .ptab.on { background: #fff; color: #000; height: 22px; margin-top: -1px; padding-top: 2px; border: 1px solid #111; border-top: 0; border-right-width: 2px; border-bottom-width: 2px; margin-right: 0; }
  .navbody { height: 275px; flex: none; display: flex; border-left: 1px solid #a8a8a8; border-top: 2px solid #c8c8c8; box-sizing: border-box; }
  .tree { width: 247px; flex: none; position: relative; overflow: hidden; background: #fff; height: 273px; }
  .guides { position: absolute; left: -1px; top: 0; width: 248px; height: 273px; }
  .node { height: 22px; display: flex; align-items: center; position: relative; margin-left: -1px; white-space: nowrap; }
  .boxslot { width: 16px; flex: none; display: flex; justify-content: center; }
  .exp { width: 11px; height: 11px; display: block; }
  .nicon { width: 16px; height: 16px; margin-left: 7px; flex: none; background: #fff; }
  .nlabel { margin-left: 7px; }
  .navtabs { padding-left: 3px; }
  .navtabs .ptab.on { height: 21px; padding-top: 1px; }

  /* chart */
  .chartcol { flex: 1; min-width: 0; display: flex; flex-direction: column; margin-left: 3px; }
  .chart { height: 618px; flex: none; position: relative; background: #fff; }
  .plot { width: 1646px; height: 618px; }
  .axis { font: 9.200px "Noto Sans", sans-serif; fill: #000; }
  .tag { fill: #fff; }
  .ch-head { position: absolute; left: 9px; top: 7px; display: flex; align-items: center; font-size: 9.800px; }
  .ch-head svg { width: 16px; height: 14px; margin-right: 6px; }
  .trade { position: absolute; left: 7px; top: 25px; width: 219px; height: 64px; background: #fff; display: flex; flex-direction: column; font-family: "Noto Sans", sans-serif; color: #fff; }
  .trade-top { height: 24px; display: flex; }
  .t-side { width: 51px; background: linear-gradient(#3e3ff0, #2a2ce0); display: flex; padding: 0 2px; box-sizing: border-box; }
  .t-side span { flex: 1; text-align: center; line-height: 22px; height: 23px; border-bottom: 1px solid #0b0b90; font-size: 12px; }
  .t-mid { width: 110px; height: 22px; margin: 0 4px; display: flex; color: #222; background: #fff; border: 1px solid #c8c8c8; box-sizing: border-box; align-items: stretch; }
  .spin { width: 21px; background: #e6e6e6; display: flex; align-items: center; justify-content: center; flex: none; }
  .tri-d { border: 3px solid transparent; border-top: 4px solid #111; border-bottom: 0; }
  .tri-u { border: 3px solid transparent; border-bottom: 4px solid #111; border-top: 0; }
  .t-vol { flex: 1; text-align: right; line-height: 20px; padding-right: 5px; }
  .trade-low { height: 40px; display: flex; justify-content: space-between; }
  .t-price { width: 109px; height: 40px; background: linear-gradient(#3439e6, #0606b0); display: flex; align-items: flex-start; padding-left: 20px; box-sizing: border-box; }
  .t-price:last-child { padding-left: 19px; width: 108px; }
  .p-s { font-size: 13px; font-weight: 700; width: 28px; margin-top: 20px; }
  .p-b { font-size: 34px; line-height: 36px; margin-top: 2px; letter-spacing: -2px; }
  .p-t { font-size: 13px; font-weight: 700; margin: 6px 0 0 6px; }

  .ctabs { height: 22px; padding-top: 1px; flex: none; display: flex; color: #808080; border-top: 1px solid #111; align-items: flex-start; box-sizing: border-box; }
  .ctab { display: flex; align-items: center; justify-content: center; height: 15px; margin-top: 3px; border-right: 1px solid #999; box-sizing: border-box; white-space: nowrap; }
  .ctab:nth-child(2), .ctab:nth-child(4) { border-right: 0; }
  .ctab.on { height: 21px; margin-top: -1px; padding-top: 1px; background: #fff; color: #000; border: 2px solid #111; border-top: 0; border-left-width: 1px; }
  .ctab-spacer { flex: 1; }
  .pager { width: 23px; text-align: center; color: #c0c0c0; font-size: 12px; margin-top: 3px; }

  /* toolbox */
  .toolbox { height: 289px; flex: none; display: flex; border-top: 0; padding-top: 6px; box-sizing: border-box; }
  .strip { width: 15px; flex: none; position: relative; display: flex; flex-direction: column; border-top: 1px solid #a0a0a0; }
  .strip .x { position: static; display: block; width: 13px; height: 14px; }
  .strip-bar { flex: none; width: 13px; height: 263px; background: linear-gradient(#cad9ec, #8fb4dd); position: relative; }
  .strip-bar span { position: absolute; left: 0; bottom: 0; width: 13px; writing-mode: vertical-rl; transform: rotate(180deg); line-height: 13px; white-space: nowrap; font-size: 13px; }
  .tb-right { flex: 1; min-width: 0; display: flex; flex-direction: column; }
  .tb-upper { height: 255px; display: flex; flex: none; background: #fff; border-top: 1px solid #a0a0a0; box-sizing: border-box; }
  .trades { width: 1880px; flex: none; }
  .tr { display: grid; grid-template-columns: 176px 138px 107px 93px 153px 154px 154px 154px 155px 154px 332px 110px; height: 22px; background: #fff; box-sizing: border-box; border-bottom: 1px solid #c8c8c8; }
  .tr > span { display: flex; align-items: center; padding: 0 3px; border-right: 1px solid #d2d2d2; white-space: nowrap; min-width: 0; box-sizing: border-box; }
  .tr.z { background: #ebebeb; }
  .tr.th { height: 24px; border-bottom: 0; }
  .tr.th > span { border-right-color: #e6e6e6; }
  .tr.th > span.a-r { padding-right: 5px; }
  .a-r { justify-content: flex-end; }
  .tr.th > span.a-c { justify-content: center; position: relative; padding-left: 44px; }
  .th .first { padding-left: 6px; }
  .comment { grid-column: span 6; }
  .rowtime { padding-left: 5px !important; }
  .ricon { width: 12px; height: 16px; margin-right: 6px; flex: none; display: flex; align-items: center; }
  .ricon svg { width: 12px; }
  .sort { position: absolute; right: 12px; top: 8px; border: 3.500px solid transparent; border-bottom: 4px solid #111; border-top: 0; }
  .selrow, .selrow.z { background: #0078d7 !important; color: #fff; }
  .selrow > span { border-right-color: #4aa0e3; }
  .tphit { background: #5ff25f; }
  .slhit { background: #ff9f9f; }
  .money { color: var(--blue); }
  .neg .money { color: var(--red); }
  .selrow .money { color: #fff; }
  .sumrow { height: 23px; background: #c4c4c4; display: flex; align-items: center; padding-left: 5px; font-weight: 700; position: relative; font-size: 12.700px; }
  .sumrow .ricon { height: 12px; }
  .sumtext { white-space: nowrap; }
  .sumtotal { margin-left: auto; margin-right: 114px; }
  .btabs { height: 28px; flex: none; display: flex; align-items: flex-start; margin-top: 0; border-top: 1px solid #111; box-sizing: border-box; color: #808080; margin-right: 3px; position: relative; }
  .btab { display: flex; align-items: center; justify-content: center; height: 16px; margin-top: 3px; border-right: 1px solid #8a8a8a; box-sizing: border-box; white-space: nowrap; }
  .btab.nosep { border-right: 0; }
  .btab.on { background: #fff; color: #000; height: 21px; margin-top: -1px; border: 1px solid #111; border-top: 0; border-right-width: 2px; border-bottom-width: 2px; }
  .btab sub { color: #ff1a1a; font-size: 10px; font-weight: 700; margin-left: 3px; align-self: flex-end; line-height: 10px; transform: translateY(2px); }
  .bt-r { display: flex; align-items: center; color: #222; height: 26px; flex: none; }
  .bt-r svg { width: 15px; height: 17px; margin-right: 6px; }
  .b1 { width: 79px; } .b2 { width: 85px; } .b3 { width: 57px; } .b4 { width: 71px; }

  /* status */
  .status { flex: 1; display: flex; background: #f0f0f0; border-top: 1px solid #c4c4c4; box-shadow: inset 0 1px 0 #fff; align-items: flex-end; }
  .st { height: 19px; display: flex; align-items: center; border-right: 1px solid #a8a8a8; padding-left: 6px; padding-top: 2px; box-sizing: border-box; white-space: nowrap; flex: none; }
  .st:first-child { padding-left: 0; }
  .lastst { border-right: 0; flex: 1; padding-left: 7px; }
  .lastst svg { width: 16px; height: 14px; margin-right: 7px; }
</style>
